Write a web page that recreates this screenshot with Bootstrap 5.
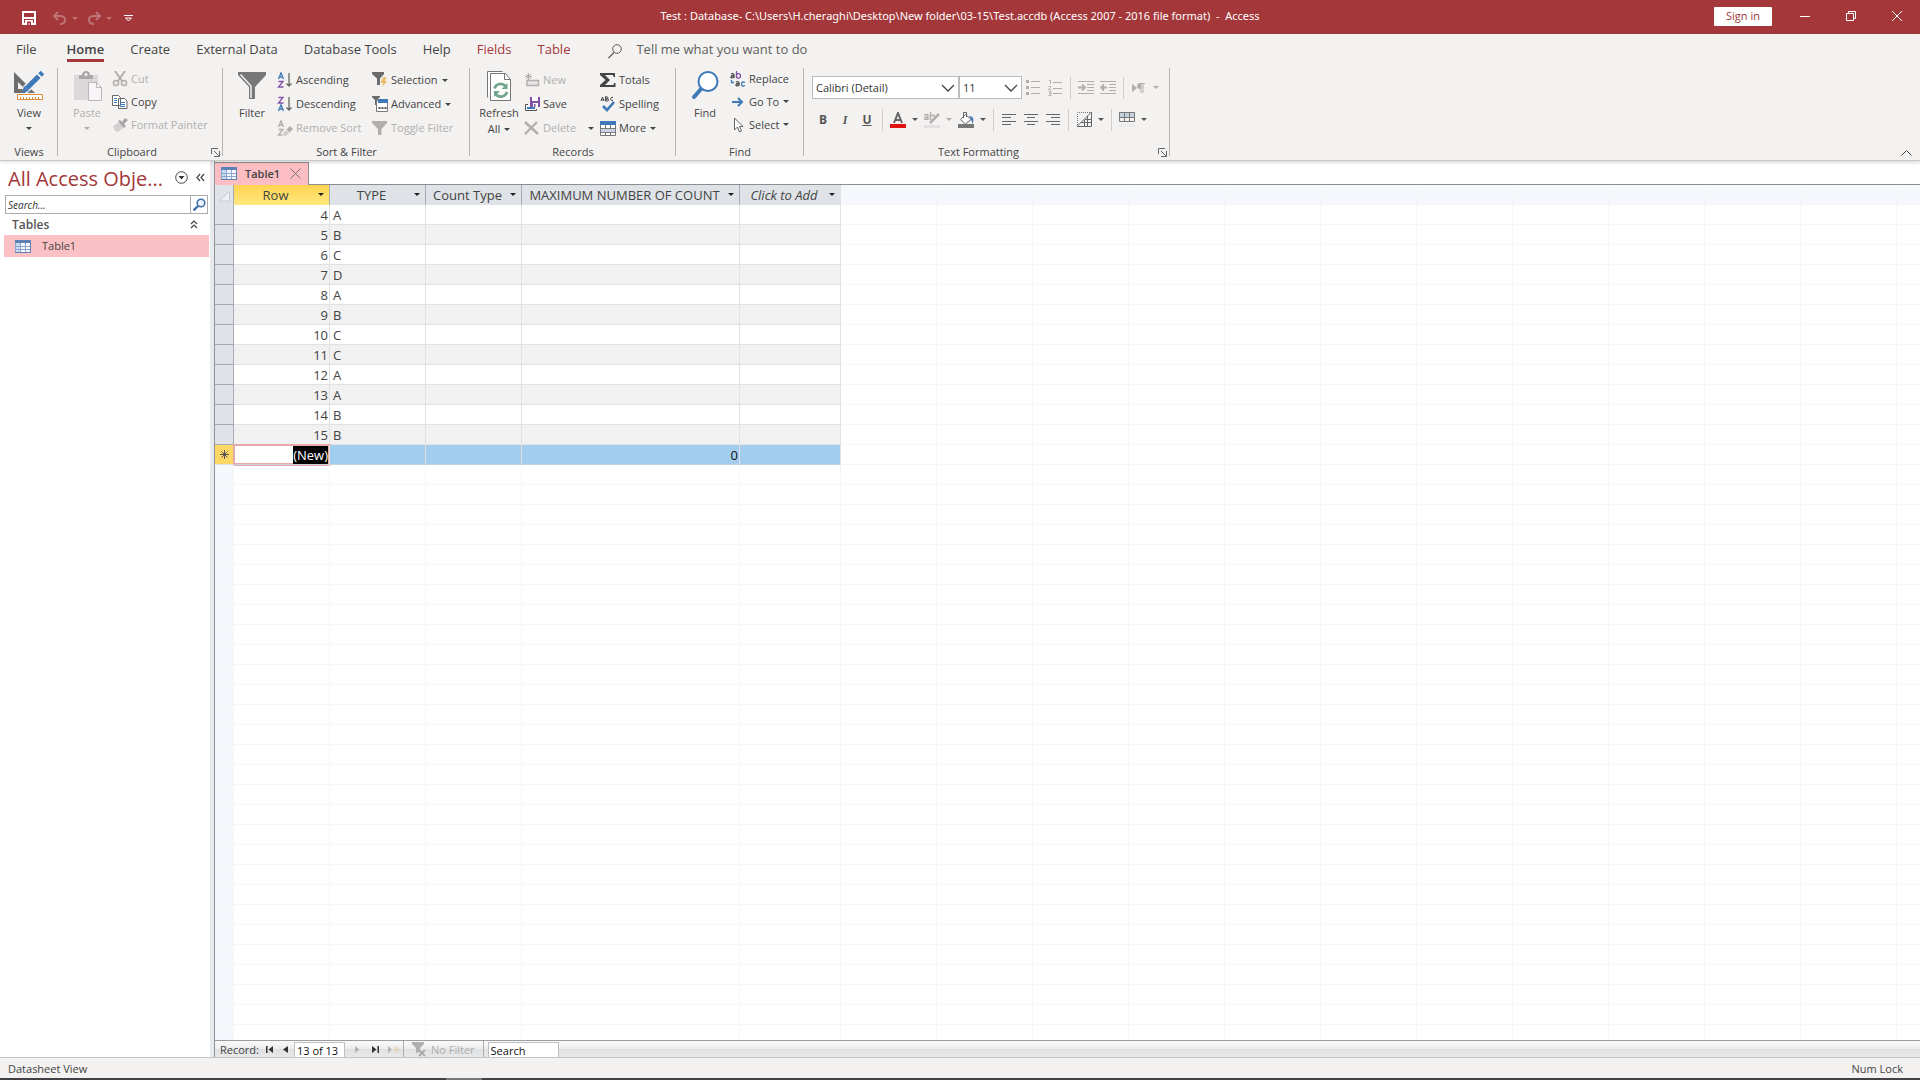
<!DOCTYPE html>
<html lang="en">
<head>
<meta charset="utf-8">
<meta name="viewport" content="width=device-width, initial-scale=1">
<title>Test : Database - Access</title>
<link rel="stylesheet" href="https://cdn.jsdelivr.net/npm/bootstrap@5.3.0/dist/css/bootstrap.min.css">
<style>
:root{--brand:#a4373a;--ink:#444;--off:#b1afad;--line:#c3c1bf}
body{font:11px/16px "Open Sans","Noto Sans",sans-serif;color:var(--ink);background:#fff;overflow:hidden}
button{font:inherit;color:inherit;background:none;border:0;padding:0}
svg{display:block;flex:none}
a{color:inherit;text-decoration:none}
/* title bar */
.app-title{display:grid;grid-template-columns:1fr auto 1fr;height:34px;background:var(--brand);color:#fff;align-items:center}
.app-title .dim{opacity:.3}
.quick{padding:0 0 6px 22px;height:34px}
.custom{margin-left:12px}
.caption{padding-bottom:2px;font-family:"Noto Sans","Open Sans",sans-serif}
.win{width:46px;height:34px;display:flex;align-items:center;justify-content:center;padding-bottom:2px}
.signin{width:58px;height:19px;background:#fff;color:var(--brand);border-radius:1px;margin:0 10px 2px 0}
.crt{display:inline-block;flex:none;width:0;height:0;border:3px solid transparent;border-top-color:currentColor;border-bottom:0}
/* ribbon */
.ribbon{background:#f3f2f1;border-bottom:1px solid #c8c8c8;box-shadow:0 1px 4px #0002;position:relative}
.tabs{height:34px;font-size:13px;line-height:18px;padding:6px 0 0 16px;gap:26px}
.tabs a{height:22px}
.tabs .first{margin-right:4px}
.tabs .on{font-weight:600;border-bottom:3px solid var(--brand)}
.tabs .ctx{color:var(--brand)}
.tell{margin-left:12px;gap:14px;color:#605e5c}
.tell input{font:inherit;border:0;background:none;padding:0;width:220px;outline:0}
.tell input::placeholder{color:#605e5c;opacity:1}
.groups{height:92px}
.grp{display:flex;flex-direction:column;background:linear-gradient(#b8b6b4,#b8b6b4) right top/1px 88px no-repeat}
.grp-body{display:flex;height:76px;padding-left:4px}
.grp-label{text-align:center;position:relative}
.grp-label.has-launch{padding-right:17px}
.launch{position:absolute;right:3px;top:4px}
.big{width:50px;display:flex;flex-direction:column;align-items:center;padding-top:2px}
.big svg{margin-bottom:3px}
.big .crt{margin-top:6px}
.stack{display:flex;flex-direction:column}
.stack button,.stack div{display:flex;align-items:center;height:24px;gap:3px;white-space:nowrap}
.stack.tight{margin-top:-1px}
.stack.tight button{height:23px}
.stack .crt{margin-left:1px}
.off{color:var(--off)!important}
.g-views{width:58px}
.g-clip{width:165px}.g-sort{width:247px}.g-rec{width:206px}.g-find{width:128px}.g-text{width:366px}
.g-sort .mid{width:95px}.g-rec .mid{width:76px}
.g-text .grp-body{flex-direction:column;padding:8px 0 0 8px}
.fmt{display:flex;align-items:center;height:23px;margin-bottom:9px;color:#555}
.fmt button{width:22px;height:22px;display:flex;align-items:center;justify-content:center;font-size:12px}
.fmt .drop{width:12px}
.fmt .slant{font-family:"Liberation Serif",serif}
.fmt i{width:1px;height:22px;background:#d0cecc;margin:0 4px}
.fmt .form-select{font:inherit;color:#333;height:23px;padding:0 24px 0 3px;border:1px solid #bbb;border-radius:0;background-size:16px 10px;background-position:right 2px center;
--bs-form-select-bg-img:url("data:image/svg+xml,%3Csvg xmlns='http://www.w3.org/2000/svg' viewBox='0 0 16 10'%3E%3Cpath d='M2 2l6 6 6-6' fill='none' stroke='%23444' stroke-width='1.3'/%3E%3C/svg%3E")}
.f-name{width:147px!important}.f-size{width:63px!important}
.collapse-rb{position:absolute;right:8px;bottom:4px}
/* navigation pane */
.nav-pane{width:210px;padding-top:4px}
.nav-title{font-size:20px;line-height:28px;color:var(--brand);padding:0 5px 0 8px}
.nav-title h1{font:inherit;margin:0;flex:1;white-space:nowrap}
.nav-title button{margin-bottom:4px}
.find-box{margin:2px 2px 0 5px;height:19px;border:1px solid #ababab}
.find-box input{border:0;padding:0 2px;flex:1;min-width:0;font:italic 10px/16px "Open Sans","Noto Sans",sans-serif;outline:0}
.find-box input::placeholder{color:#333;opacity:1}
.find-box button{width:17px;border-left:1px solid #ababab;display:flex;align-items:center;justify-content:center}
.nav-group{height:21px;padding:0 12px;font-weight:600;font-size:12px;color:#555;width:100%}
.nav-item1{height:22px;margin:0 1px 0 4px;padding-left:11px;gap:11px;background:#fcc1c4}
.splitter{width:5px;background:#e9eaee;border-right:1px solid #8d9499}
/* document */
.doc-tabs{height:24px;padding-top:1px;border-bottom:1px solid #8b8f90;background:linear-gradient(#f4f4f4,#fff 5px)}
.doc-tab{width:94px;height:23px;background:#fcbec2;border:1px solid #8b8f90;border-width:1px 1px 0 0;padding:0 7px 1px 6px;font-weight:600}
.doc-tab span{margin-left:8px;margin-right:auto}
.sheet{--grid:#f5f6f7;overflow:hidden}
.sheet-top{display:flex}
.beyond{flex:1;background:linear-gradient(#f6f7fd,#f6f7fd) 0 0/100% 20px no-repeat;position:relative}
.beyond::after,.below-right{content:"";background-image:linear-gradient(90deg,transparent 95px,var(--grid) 95px),linear-gradient(transparent 19px,var(--grid) 19px);background-size:96px 20px}
.beyond::after{position:absolute;inset:0}
.sheet table{table-layout:fixed;width:626px;font-size:13px;flex:none;border-collapse:separate;border-spacing:0;color:#444}
.w-sel{width:19px}.w-col{width:96px}.w-max{width:218px}.w-add{width:101px}
.sheet th,.sheet td{height:20px;padding:0 1px 0 3px;border-right:1px solid #e0e1e2;border-bottom:1px solid #e0e1e2;line-height:18px;white-space:nowrap}
.sheet thead th{background:#dfe3e8;border-right-color:#a5abb0;border-bottom-color:#dfe3e8;font-weight:400;padding:0 5px 0 1px}
.sheet thead th:last-child{border-right-color:#e0e1e2;font-style:italic}
.th-in{display:flex;align-items:center;justify-content:space-between;gap:2px}
.th-in span{flex:1;text-align:center}
.th-in .crt{color:#222}
.sheet thead .picked{background:linear-gradient(#ffd34f,#ffe77c);border-bottom-color:#ffe77c}
.sheet tbody th{background:#dfe3e8;border-color:#a5abb0;padding:0}
.sheet tbody tr:nth-child(even) td{background:#f1f1f1}
.num{text-align:right}
.sheet tbody .new-row td{background:#a3cdee;color:#111;border-bottom-color:#c4d3de}
.sheet tbody .new-row th{background:#ffd766;text-align:center;border-color:#e0e1e2}
.sheet tbody .new-row .cursor{background:#fff;box-shadow:inset 0 0 0 1px #e9a8ac,0 0 0 1px #e9a8ac}
.cursor span{background:#000;color:#fff;display:inline-block;line-height:18px}
.sheet-below{display:flex;flex:1}
.sheet-below div{border-right:1px solid var(--grid);background:linear-gradient(transparent 19px,var(--grid) 19px) 0 0/100% 20px}
.sheet-below .w-sel{background-color:#f6f7fd}
.sheet-below .below-right{flex:1;border:0;background-image:linear-gradient(90deg,transparent 95px,var(--grid) 95px),linear-gradient(transparent 19px,var(--grid) 19px);background-size:96px 20px}
/* record navigator */
.recnav{height:17px;border-top:1px solid #9a9da0;background:linear-gradient(#fafafa,#ededee 50%,#dfe0e2 51%,#e8e9ea);padding-left:5px;line-height:15px}
.recnav input{font:inherit;color:#111;border:1px solid #c0c0c0;border-bottom:0;height:15px;padding:0 2px;border-radius:0;background:#fff;outline:0;align-self:flex-end}
.recnav input::placeholder{color:#111;opacity:1}
.recnav label{margin-right:3px}
.rec-no{width:51px}.rec-find{width:71px}
.recnav .step{width:18px;display:flex;justify-content:center}
.recnav .back{width:16px}
.recnav .bar{width:1px;height:16px;background:#a9abad}
.status{height:21px;background:#f3f2f1;border-top:1px solid #c4c4c4;padding:1px 17px 0 8px;line-height:20px}
.edge{height:2px;background:linear-gradient(90deg,transparent 446px,#777 446px,#777 482px,transparent 482px) #414145}
</style>
<script src="https://cdn.jsdelivr.net/npm/bootstrap@5.3.0/dist/js/bootstrap.bundle.min.js"></script>
</head>
<body class="vh-100 d-flex flex-column">
<svg width="0" height="0" class="position-absolute" aria-hidden="true">
<symbol id="grid-ic" viewBox="0 0 16 13"><path fill="#f4f8fd" d="M0 0h16v13H0z"/><path fill="#c7daf0" d="M1 3h4v10H1z"/><path fill="none" stroke="#8ba6cc" d="M.5.5h15v12H.5zM5.500 3v10M10.500 3v10M0 6.500h16M0 9.500h16"/><path fill="#5f80b4" d="M0 0h16v3H0z"/><path fill="none" stroke="#5f80b4" d="M0 12.500h16M15.500 0v13"/></symbol>
<symbol id="funnel" viewBox="0 0 16 16"><path fill="currentColor" d="M0 1h15v2L9.500 9v6H6V9L0 3z"/></symbol>
</svg>
<header class="app-title">
  <div class="quick d-flex align-items-center">
    <button aria-label="Save" class="mt-2"><svg width="14" height="14"><path fill="none" stroke="#fff" stroke-width="2" d="M1 1h12v12H1z"/><path fill="#fff" d="M2 6h10v2H2zM3 9h8v4H3z"/><path fill="#a4373a" d="M5 10.500h4V14H7.500v-2H6.500v2H5z"/></svg></button>
    <button aria-label="Undo" class="dim d-flex align-items-center mt-2"><svg width="16" height="14" class="ms-3"><path fill="none" stroke="#fff" stroke-width="2" d="M6 1L2 5l4 4M2 5h7c6 1 5 8-1 8"/></svg><span class="crt ms-1"></span></button>
    <button aria-label="Redo" class="dim d-flex align-items-center mt-2"><svg width="16" height="14" class="ms-2"><path fill="none" stroke="#fff" stroke-width="2" d="M10 1l4 4-4 4M14 5H7c-6 1-5 8 1 8"/></svg><span class="crt ms-1"></span></button>
    <button aria-label="Customize" class="mt-2 custom"><svg width="9" height="8"><path fill="none" stroke="#fff" d="M0 1.500h9M1.500 4l3 3 3-3z"/></svg></button>
  </div>
  <div class="caption text-nowrap">Test : Database- C:\Users\H.cheraghi\Desktop\New folder\03-15\Test.accdb (Access 2007 - 2016 file format) &nbsp;-&nbsp; Access</div>
  <div class="d-flex justify-content-end align-items-center">
    <button class="signin">Sign in</button>
    <button class="win" aria-label="Minimize"><svg width="10" height="10"><path stroke="#fff" d="M0 5.500h10"/></svg></button>
    <button class="win" aria-label="Restore"><svg width="10" height="10"><path fill="none" stroke="#fff" d="M.5 2.500h7v7h-7zM2.500 2V.5h7v7H8"/></svg></button>
    <button class="win" aria-label="Close"><svg width="10" height="10"><path stroke="#fff" d="M0 0l10 10M10 0L0 10"/></svg></button>
  </div>
</header>

<div class="ribbon">
  <nav class="tabs d-flex">
    <a href="#" class="first">File</a><a href="#" class="on">Home</a><a href="#">Create</a><a href="#">External Data</a><a href="#">Database Tools</a><a href="#">Help</a><a href="#" class="ctx">Fields</a><a href="#" class="ctx">Table</a>
    <label class="tell d-flex align-items-start"><svg width="14" height="15" class="mt-1"><circle cx="9" cy="5" r="4.300" fill="none" stroke="#605e5c"/><path stroke="#605e5c" stroke-width="1.300" d="M6 8.500L.5 14"/></svg><input type="text" placeholder="Tell me what you want to do" aria-label="Tell me what you want to do"></label>
  </nav>
  <div class="groups d-flex">
    <section class="grp g-views"><div class="grp-body">
      <button class="big"><svg width="30" height="32"><path fill="#6d6d6d" fill-rule="evenodd" d="M0 2l21 21H0zM4 12v7h7z"/><path stroke="#f3f2f1" stroke-width="8" d="M10 21L28 3"/><path stroke="#3f79b8" stroke-width="5" d="M12.500 18.500L25 6M26 5l2.500-2.500"/><path fill="#3f79b8" d="M8 23l2-7 5 5z"/><path stroke="#f3f2f1" d="M23 4l4 4"/><path fill="#fff" stroke="#dd8a3a" d="M3.500 24.500h25v5h-25z"/><path stroke="#dd8a3a" d="M6.500 27v2M9.500 27v2M12.500 27v2M15.500 27v2M18.500 27v2M21.500 27v2M24.500 27v2"/></svg>View<span class="crt"></span></button>
    </div><div class="grp-label">Views</div></section>

    <section class="grp g-clip"><div class="grp-body">
      <button class="big off"><svg width="30" height="32"><path fill="#dcd8d9" d="M2 5h24v25H2z"/><path fill="#aaa8a8" d="M7 5h3a4 4 0 0 1 8 0h3v4H7z"/><circle cx="14" cy="4.500" r="1.500" fill="#f3f2f1"/><path fill="#f8f4f8" stroke="#b9b5b9" d="M16.500 12.500h8l5 5v13h-13z"/><path fill="none" stroke="#b9b5b9" d="M24.500 12.500v5h5"/></svg>Paste<span class="crt"></span></button>
      <div class="stack tight">
        <button class="off"><svg width="16" height="16"><path stroke="currentColor" stroke-width="2" d="M3 0l7 10M13 0L6 10"/><circle cx="4" cy="12" r="2.500" fill="none" stroke="currentColor" stroke-width="1.500"/><circle cx="12" cy="12" r="2.500" fill="none" stroke="currentColor" stroke-width="1.500"/></svg>Cut</button>
        <button><svg width="16" height="14"><path fill="#fff" stroke="#666" d="M.5.500h6l2 2v8h-8zM6.500 3.500h6l2.500 2.500v7.500H6.500z"/><path stroke="#3f79b8" d="M2 3.500h3M2 5.500h3M2 7.500h3M8 7.500h5M8 9.500h5M8 11.500h5"/></svg>Copy</button>
        <button class="off"><svg width="16" height="14"><path fill="#d3d0d0" d="M1 8l6-4 5 5-6 5-3-1z"/><path fill="#a5a3a3" d="M6 3l2-1 2 2 3-4 3 2-4 4 2 2-2 2z"/></svg>Format Painter</button>
      </div>
    </div><div class="grp-label has-launch">Clipboard<button class="launch" aria-label="Clipboard options"><svg width="9" height="9"><path fill="none" stroke="#666" d="M.5 6V.5H7M3 3l5 5M8.500 3v5.500H3"/></svg></button></div></section>

    <section class="grp g-sort"><div class="grp-body">
      <button class="big"><svg width="28" height="32"><path fill="#777" d="M0 2h28v3L17 17v12h-6V17L0 5z"/><path fill="none" stroke="#f3f2f1" stroke-width="1.500" d="M2.500 4.500L13 16v12"/></svg>Filter</button>
      <div class="stack mid">
        <button><svg width="16" height="16"><path fill="none" stroke="#3f79b8" stroke-width="1.300" d="M1.500 7L4 .8 6.500 7M2.500 5h3"/><path fill="none" stroke="#8250a8" stroke-width="1.300" d="M1.500 9.500h4.500L1.500 15h5"/><path fill="none" stroke="#666" stroke-width="1.300" d="M12 1v13M9.500 11.500L12 14l2.500-2.500"/></svg>Ascending</button>
        <button><svg width="16" height="16"><path fill="none" stroke="#3f79b8" stroke-width="1.300" d="M1.500 15L4 8.800 6.500 15M2.500 13h3"/><path fill="none" stroke="#8250a8" stroke-width="1.300" d="M1.500 1.500h4.500L1.500 7h5"/><path fill="none" stroke="#666" stroke-width="1.300" d="M12 1v13M9.500 11.500L12 14l2.500-2.500"/></svg>Descending</button>
        <button class="off"><svg width="16" height="16"><path fill="none" stroke="currentColor" stroke-width="1.300" d="M1.500 7L4 .8 6.500 7M2.500 5h3M1.500 9.500h4.500L1.500 15h4"/><path fill="#d0cdcd" d="M6 13l3-3 3 3-3 3H7z"/><path fill="currentColor" d="M9.500 9.500L13 6l3 3-3.500 3.500z"/></svg>Remove Sort</button>
      </div>
      <div class="stack">
        <button><svg width="16" height="16"><path fill="#6b6b6b" d="M0 0h12v2L8 6.500V13H5V6.500L0 2z"/><path fill="#e9b964" stroke="#f3f2f1" stroke-width=".5" d="M11 5h4l-2 4h3l-7 7 2-5H8z"/></svg>Selection<span class="crt"></span></button>
        <button><svg width="16" height="16"><path fill="#6b6b6b" d="M0 0h8v1L5 4v5H3V4L0 1z"/><path fill="#fff" stroke="#777" d="M4.500 4.500h11v11h-11z"/><path fill="#3f79b8" d="M6 3h10v4H6z"/><path stroke="#555" stroke-width="2" stroke-dasharray="2 1" d="M6.500 12h8"/></svg>Advanced<span class="crt"></span></button>
        <button class="off"><svg width="16" height="16"><use href="#funnel"/></svg>Toggle Filter</button>
      </div>
    </div><div class="grp-label">Sort &amp; Filter</div></section>

    <section class="grp g-rec"><div class="grp-body">
      <button class="big"><svg width="26" height="32"><path fill="#fff" stroke="#777" d="M1.500 27.500v-26h15"/><path fill="#fff" stroke="#777" d="M4.500 3.500h15l5 6v21h-20z"/><path fill="none" stroke="#777" d="M18.500 3.500v6h6"/><path fill="none" stroke="#6ea58b" stroke-width="2.600" d="M8.500 18.500a6.500 6.500 0 0 1 11-2.500M21 22a6.500 6.500 0 0 1-11 2.500"/><path fill="#6ea58b" d="M21.500 13v6h-6zM8 27v-6h6z"/></svg>Refresh<span class="d-flex align-items-center">All<span class="crt mt-0 ms-1"></span></span></button>
      <div class="stack mid">
        <button class="off"><svg width="16" height="16"><path stroke="currentColor" d="M4.500 1v7M1 4.500h7M2 2l5 5M7 2L2 7"/><path fill="#e6e4e4" stroke="currentColor" stroke-width="1.400" d="M3 8.500h11.500v5H3z"/></svg>New</button>
        <button><svg width="16" height="16"><path fill="#8250a8" d="M6 1h10v10H6z"/><path fill="#fff" d="M8 1h6v4H8zM9 7h5v4H9z"/><path fill="#8250a8" d="M10 8h1.500v3H10z"/><path fill="none" stroke="#555" d="M4 8.500H1.500v6h11V13"/><path fill="#3f79b8" d="M3 11h8v2H3z"/></svg>Save</button>
        <div><button class="off"><svg width="16" height="16"><path fill="none" stroke="currentColor" stroke-width="2.400" d="M1 2l13 12M13 2L1 14"/></svg>Delete</button><button class="ms-2" aria-label="Delete options"><span class="crt"></span></button></div>
      </div>
      <div class="stack">
        <button><svg width="16" height="16"><path fill="#444" d="M0 1h15v4h-1.500L13 3H5l5 5-5 5h8.500l.5-2h1.500v4H0v-2l5.500-5L0 3z"/></svg>Totals</button>
        <button><svg width="16" height="16"><path fill="none" stroke="#444" d="M1 5l1.500-4L4 5M1.500 4h2M5.500.5V5h2c1.500 0 1.500-2 0-2h-2 1.500c1.500 0 1.500-2 0-2zM13 1.500c-3-1.500-3 4.500 0 3"/><path fill="none" stroke="#3f79b8" stroke-width="2.600" d="M3 10l4 4 7-8"/></svg>Spelling</button>
        <button><svg width="16" height="15"><path fill="#fff" stroke="#777" d="M.5.5h15v14H.5z"/><path fill="#c7d4e6" d="M1 7h14v4H1z"/><path fill="#3f79b8" d="M0 0h16v4H0z"/><path stroke="#777" d="M0 7.500h16M0 11.500h16M5.500 4v3M10.500 4v3M5.500 11v4M10.500 11v4"/></svg>More<span class="crt"></span></button>
      </div>
    </div><div class="grp-label">Records</div></section>

    <section class="grp g-find"><div class="grp-body">
      <button class="big"><svg width="28" height="32"><path stroke="#3f79b8" stroke-width="4" stroke-linecap="round" d="M10 19l-7 8"/><circle cx="17" cy="11.500" r="9.500" fill="#fff" stroke="#3f79b8" stroke-width="2"/></svg>Find</button>
      <div class="stack tight">
        <button><svg width="16" height="16"><g fill="none" stroke-width="1.300"><path stroke="#444" d="M1 3q3-1 3 1v3M4 4.500q-3 0-3 1.500t3 .5"/><path stroke="#8250a8" d="M6.500 0v7M6.500 4c0-2 4-2 4 1s-4 2.500-4 1"/><path stroke="#3f79b8" d="M1.500 9v2.500H4"/><path stroke="#444" d="M6 11q3-1 3 1v3M9 12.500q-3 0-3 1.500t3 .5"/><path stroke="#3f79b8" d="M15 11.500q-3.500-1.500-3.500 1.500t3.500 1.500"/></g></svg>Replace</button>
        <button><svg width="16" height="16"><path fill="none" stroke="#3f79b8" stroke-width="2" d="M2 8h10M8 4l4 4-4 4"/></svg>Go To<span class="crt"></span></button>
        <button><svg width="16" height="16"><path fill="#fff" stroke="#666" d="M4.500 1v12l3-3 2 5 2-1-2-4.500h3.500z"/></svg>Select<span class="crt"></span></button>
      </div>
    </div><div class="grp-label">Find</div></section>

    <section class="grp g-text"><div class="grp-body">
      <div class="fmt">
        <select class="form-select f-name" aria-label="Font"><option>Calibri (Detail)</option></select><select class="form-select f-size" aria-label="Font size"><option>11</option></select>
        <button class="off" aria-label="Bullets"><svg width="14" height="15"><path fill="currentColor" d="M0 0h3v3H0zM0 6h3v3H0zM0 12h3v3H0z"/><path stroke="currentColor" d="M5 1.500h9M5 7.500h9M5 13.500h9"/></svg></button>
        <button class="off" aria-label="Numbering"><svg width="14" height="16"><path fill="none" stroke="currentColor" d="M1 .5h1.500V4M.5 6.500h2v1L.5 9.500h3M.5 11.500h2.500v4H.5M1 13.500h2M5 2.500h9M5 8.500h9M5 13.500h9"/></svg></button>
        <i></i>
        <button class="off" aria-label="Increase indent"><svg width="16" height="14"><path fill="none" stroke="currentColor" d="M0 .5h16M9 3.500h7M9 6.500h7M9 9.500h7M0 12.500h16"/><path fill="none" stroke="currentColor" stroke-width="1.800" d="M0 6.500h6M4 3.500l3 3-3 3"/></svg></button>
        <button class="off" aria-label="Decrease indent"><svg width="16" height="14"><path fill="none" stroke="currentColor" d="M0 .5h16M9 3.500h7M9 6.500h7M9 9.500h7M0 12.500h16"/><path fill="none" stroke="currentColor" stroke-width="1.800" d="M1 6.500h6M4 3.500l-3 3 3 3"/></svg></button>
        <i></i>
        <button class="off" aria-label="Text direction"><svg width="14" height="10"><path fill="currentColor" d="M0 1l5 4-5 4zM10 0H8a2.500 2.500 0 0 0 0 6h.500v4h1V1h1v9h1V1H13V0z"/></svg></button><button class="drop off" aria-label="Direction options"><span class="crt"></span></button>
      </div>
      <div class="fmt">
        <button class="fw-bold" aria-label="Bold">B</button><button class="fst-italic fw-bold slant" aria-label="Italic">I</button><button class="fw-bold text-decoration-underline" aria-label="Underline">U</button>
        <i></i>
        <button aria-label="Font color"><svg width="16" height="16"><path fill="none" stroke="#666" stroke-width="2" d="M4 11L8 1l4 10M5.500 8h5"/><path fill="#e01212" d="M0 12h16v4H0z"/></svg></button><button class="drop" aria-label="Font color options"><span class="crt"></span></button>
        <button class="off" aria-label="Highlight"><svg width="16" height="16"><path fill="none" stroke="currentColor" stroke-width="1.400" d="M0 3q4-1.500 4 1v4M4 5q-4 0-4 1.500t4 .5M6.500 0v8M6.500 4q4-2 4 1"/><path stroke="currentColor" stroke-width="2.500" d="M15 2L6 11"/><path fill="#e3e0e4" d="M0 13h16v3H0z"/></svg></button><button class="drop off" aria-label="Highlight options"><span class="crt"></span></button>
        <button aria-label="Fill color"><svg width="16" height="16"><path fill="#fff" stroke="#666" d="M7.500 2.500l5.500 5-5.500 4.500-5-4.500z"/><path fill="none" stroke="#666" d="M5.500 6V.5h3V5"/><path fill="#3f79b8" d="M11 4c5 0 5 4 3.500 8-1-3-1-5-3.500-8z"/><path fill="#777" d="M0 12h16v4H0z"/></svg></button><button class="drop" aria-label="Fill color options"><span class="crt"></span></button>
        <i></i>
        <button aria-label="Align left"><svg width="14" height="11"><path stroke="#666" d="M0 .5h14M0 3.500h9M0 7.500h14M0 10.500h9"/></svg></button>
        <button aria-label="Center"><svg width="14" height="11"><path stroke="#666" d="M0 .5h14M3 3.500h8M0 7.500h14M3 10.500h8"/></svg></button>
        <button aria-label="Align right"><svg width="14" height="11"><path stroke="#666" d="M0 .5h14M5 3.500h9M0 7.500h14M5 10.500h9"/></svg></button>
        <i></i>
        <button aria-label="Gridlines"><svg width="15" height="15"><path fill="none" stroke="#777" stroke-dasharray="1 1" d="M.5 15V.5H15"/><path fill="none" stroke="#666" d="M0 14.500L14.500 0v14.500zM10.500 4v10M4 10.500h10M7.500 8v6M8 7.500h6"/></svg></button><button class="drop" aria-label="Gridline options"><span class="crt"></span></button>
        <i></i>
        <button aria-label="Alternate row color"><svg width="16" height="16"><path fill="#c5d1df" d="M0 0h16v5H0z"/><path fill="#ecebed" d="M0 12h16v3H0z"/><path fill="none" stroke="#777" d="M.5.500h15v9H.5zM0 5.500h16M5.500 0v9M10.500 0v9"/></svg></button><button class="drop" aria-label="Row color options"><span class="crt"></span></button>
      </div>
    </div><div class="grp-label has-launch">Text Formatting<button class="launch" aria-label="Text formatting options"><svg width="9" height="9"><path fill="none" stroke="#666" d="M.5 6V.5H7M3 3l5 5M8.500 3v5.500H3"/></svg></button></div></section>
  </div>
  <button class="collapse-rb" aria-label="Collapse ribbon"><svg width="11" height="6"><path fill="none" stroke="#444" d="M.5 5.500l5-5 5 5"/></svg></button>
</div>

<main class="d-flex flex-fill overflow-hidden">
  <aside class="nav-pane">
    <div class="nav-title d-flex align-items-center"><h1>All Access Obje...</h1>
      <button aria-label="Pane options"><svg width="13" height="13"><circle cx="6.500" cy="6.500" r="5.800" fill="#fff" stroke="#444"/><path fill="#333" d="M3.500 5h6l-3 3.500z"/></svg></button>
      <button class="ms-2" aria-label="Close pane"><svg width="9" height="9"><path fill="none" stroke="#444" stroke-width="1.200" d="M4 1L1 4.500 4 8M8 1L5 4.500 8 8"/></svg></button>
    </div>
    <form class="find-box d-flex"><input type="text" placeholder="Search..." aria-label="Search objects"><button type="button" aria-label="Search"><svg width="13" height="13"><path stroke="#3f6fa8" stroke-width="2.400" d="M5 8l-4.500 4.500"/><circle cx="8" cy="5" r="3.800" fill="#eef4fb" stroke="#3f6fa8" stroke-width="1.600"/></svg></button></form>
    <button class="nav-group d-flex align-items-center justify-content-between">Tables<svg width="8" height="9"><path fill="none" stroke="#444" stroke-width="1.200" d="M1 4l3-3 3 3M1 8l3-3 3 3"/></svg></button>
    <a href="#" class="nav-item1 d-flex align-items-center"><svg width="16" height="13"><use href="#grid-ic"/></svg>Table1</a>
  </aside>
  <div class="splitter"></div>
  <section class="d-flex flex-column flex-fill">
    <div class="doc-tabs"><div class="doc-tab d-flex align-items-center"><svg width="16" height="13"><use href="#grid-ic"/></svg><span>Table1</span><button aria-label="Close Table1"><svg width="11" height="11"><path stroke="#777" d="M.5.500l10 10M10.500.5l-10 10"/></svg></button></div></div>
    <div class="sheet d-flex flex-column flex-fill">
      <div class="sheet-top">
        <table>
          <colgroup><col class="w-sel"><col class="w-col"><col class="w-col"><col class="w-col"><col class="w-max"><col class="w-add"></colgroup>
          <thead><tr><th class="p-0" aria-label="Select all"><svg width="18" height="18"><path fill="#eef1f5" stroke="#c6ccd3" d="M14.500 5v10h-10z"/></svg></th>
            <th class="picked"><div class="th-in"><span>Row</span><b class="crt"></b></div></th><th><div class="th-in"><span>TYPE</span><b class="crt"></b></div></th><th><div class="th-in"><span>Count Type</span><b class="crt"></b></div></th><th><div class="th-in"><span>MAXIMUM NUMBER OF COUNT</span><b class="crt"></b></div></th><th><div class="th-in"><span>Click to Add</span><b class="crt"></b></div></th></tr></thead>
          <tbody>
            <tr><th></th><td class="num">4</td><td>A</td><td></td><td></td><td></td></tr>
            <tr><th></th><td class="num">5</td><td>B</td><td></td><td></td><td></td></tr>
            <tr><th></th><td class="num">6</td><td>C</td><td></td><td></td><td></td></tr>
            <tr><th></th><td class="num">7</td><td>D</td><td></td><td></td><td></td></tr>
            <tr><th></th><td class="num">8</td><td>A</td><td></td><td></td><td></td></tr>
            <tr><th></th><td class="num">9</td><td>B</td><td></td><td></td><td></td></tr>
            <tr><th></th><td class="num">10</td><td>C</td><td></td><td></td><td></td></tr>
            <tr><th></th><td class="num">11</td><td>C</td><td></td><td></td><td></td></tr>
            <tr><th></th><td class="num">12</td><td>A</td><td></td><td></td><td></td></tr>
            <tr><th></th><td class="num">13</td><td>A</td><td></td><td></td><td></td></tr>
            <tr><th></th><td class="num">14</td><td>B</td><td></td><td></td><td></td></tr>
            <tr><th></th><td class="num">15</td><td>B</td><td></td><td></td><td></td></tr>
            <tr class="new-row"><th><svg class="mx-auto" width="9" height="9"><path stroke="#555" d="M4.500 0v9M0 4.500h9M1.500 1.500l6 6M7.500 1.500l-6 6"/></svg></th><td class="num cursor"><span>(New)</span></td><td></td><td></td><td class="num">0</td><td></td></tr>
          </tbody>
        </table>
        <div class="beyond"></div>
      </div>
      <div class="sheet-below"><div class="w-sel"></div><div class="w-col"></div><div class="w-col"></div><div class="w-col"></div><div class="w-max"></div><div class="w-add"></div><div class="below-right"></div></div>
    </div>
    <div class="recnav d-flex align-items-center">
      <label for="rec">Record:</label>
      <button class="step back" aria-label="First record"><svg width="7" height="7"><path fill="#333" d="M0 0h1.500v7H0zM7 0v7L2.500 3.500z"/></svg></button>
      <button class="step back" aria-label="Previous record"><svg width="5" height="7"><path fill="#333" d="M5 0v7L0 3.500z"/></svg></button>
      <input id="rec" class="rec-no" type="text" value="13 of 13">
      <button class="step ms-1" aria-label="Next record"><svg width="5" height="7"><path fill="#b5b5b5" d="M0 0v7l4.500-3.500z"/></svg></button>
      <button class="step" aria-label="Last record"><svg width="7" height="7"><path fill="#333" d="M5.500 0H7v7H5.500zM0 0v7l4.500-3.500z"/></svg></button>
      <button class="step" aria-label="New record"><svg width="12" height="7"><path fill="#b5b5b5" d="M0 0v7l4-3.500z"/><path stroke="#e4d3bd" d="M8.500 0v7M5 3.500h7M6 1l5 5M11 1L6 6"/></svg></button>
      <span class="bar"></span>
      <button class="off d-flex align-items-center gap-1 ms-2"><svg width="15" height="15"><path fill="currentColor" d="M0 0h12v2L8 6v4l-4 1V6L0 2z"/><path stroke="#aaa" stroke-width="1.800" d="M7 8l6 6M13 8l-6 6"/></svg>No Filter</button>
      <span class="bar ms-2 me-1"></span>
      <input class="rec-find" type="text" placeholder="Search" aria-label="Search records">
    </div>
  </section>
</main>
<footer class="status d-flex justify-content-between"><span>Datasheet View</span><span>Num Lock</span></footer>
<div class="edge"></div>
</body>
</html>
